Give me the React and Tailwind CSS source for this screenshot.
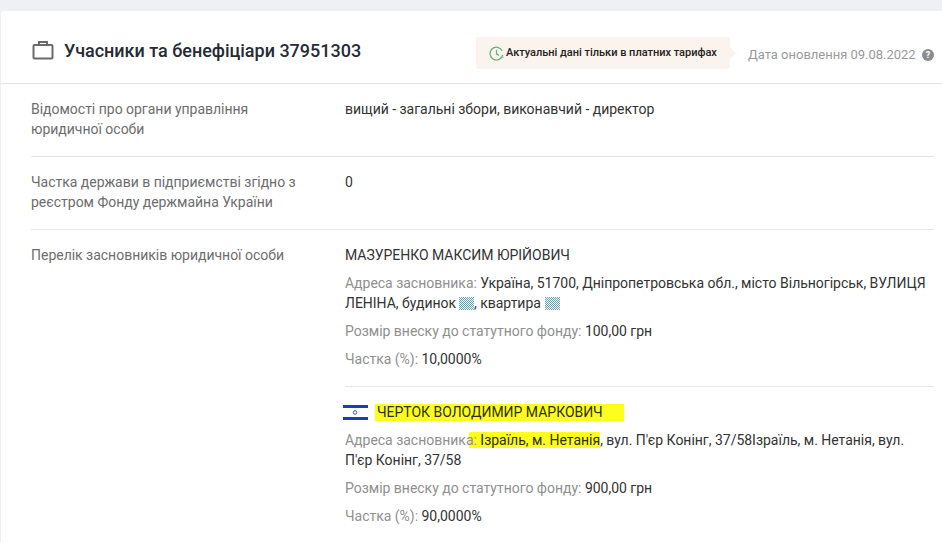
import React from 'react';

const Hidden = () => (
  <svg width="15" height="13" viewBox="0 0 15 13" shapeRendering="crispEdges" className="shrink-0">
    {Array.from({ length: 13 }).map((_, y) =>
      Array.from({ length: 15 }).map((_, x) =>
        (x + y) % 2 === 0 ? <rect key={`${x}-${y}`} x={x} y={y} width="1" height="1" fill="#5aa6b4" /> : null
      )
    )}
  </svg>
);

const Label = ({ children }) => <span className="text-[#8f8f8f]">{children}</span>;

const Row = ({ label, children, last }) => (
  <div className={`flex ml-[30px] mr-[8px] ${last ? 'pt-[15px]' : 'pt-[15px] pb-[17px] border-b border-[#e4e4e4]'}`}>
    <div className="w-[314px] shrink-0 pr-[12px] text-[#6d6d6d]">{label}</div>
    <div className="flex-1 text-[#333333]">{children}</div>
  </div>
);

export default function App() {
  return (
    <div className="h-[542px] w-[942px] overflow-hidden bg-[#eef0f5] pt-[11px] pl-px font-['Roboto',sans-serif] text-[14px] leading-[20px] tracking-[-0.015px]">
      <div className="h-full bg-white rounded-tl-[3px]">
        {/* Шапка */}
        <div className="flex h-[73px] items-center border-b border-[#e4e4e4] pl-[31px] pr-[8px]">
          <svg width="22" height="20" viewBox="0 0 22 20" fill="none" stroke="#6b6b6b" strokeWidth="2" className="shrink-0 mt-[6px]">
            <rect x="1.5" y="5" width="19" height="13.5" rx="1" />
            <path d="M7 5V2h8v3" />
          </svg>
          <h2 className="ml-[10px] text-[18px] font-medium text-[#262b33] mt-[8px]">Учасники та бенефіціари 37951303</h2>
          <div className="ml-auto relative flex h-[32px] w-[254px] items-center rounded-[3px] bg-[#fbf3ed] pl-[13px] text-[11px] font-medium text-[#222222] mt-[12px] whitespace-nowrap">
            <svg width="15" height="15" viewBox="0 0 16 16" fill="none" stroke="#5cb176" strokeWidth="1.3" className="shrink-0 mr-[2px]">
              <path d="M14.6 9.5A6.8 6.8 0 1 1 14 5" />
              <path d="M8 4v4.4l2.6 1.6" />
              <path d="M14.8 11.5v1" />
            </svg>
            Актуальні дані тільки в платних тарифах
            <span className="absolute right-[-6px] top-[10px] h-0 w-0 border-y-[6px] border-l-[6px] border-y-transparent border-l-[#fbf3ed]" />
          </div>
          <span className="ml-[18px] w-[168px] shrink-0 text-[#9a9a9a] text-[13px] mt-[16px] whitespace-nowrap">Дата оновлення 09.08.2022</span>
          <span className="ml-[6px] flex h-[12px] w-[12px] items-center justify-center rounded-full bg-[#8c8c8c] text-[9px] font-bold leading-none text-white mt-[16px]">?</span>
        </div>

        <Row label={<>Відомості про органи управління<br />юридичної особи</>}>
          вищий - загальні збори, виконавчий - директор
        </Row>

        <Row label={<>Частка держави в підприємстві згідно з<br />реєстром Фонду держмайна України</>}>
          0
        </Row>

        <Row last label="Перелік засновників юридичної особи">
          <div className="pb-[17px] border-b border-[#e4e4e4]">
            <div>МАЗУРЕНКО МАКСИМ ЮРІЙОВИЧ</div>
            <div className="mt-[8px]">
              <Label>Адреса засновника:</Label> Україна, 51700, Дніпропетровська обл., місто Вільногірськ, ВУЛИЦЯ
              <div className="flex items-center whitespace-pre">
                <span className="w-[114px] shrink-0">ЛЕНІНА, будинок</span>
                <Hidden />
                <span className="w-[71px] shrink-0">, квартира</span>
                <Hidden />
              </div>
            </div>
            <div className="mt-[8px]"><Label>Розмір внеску до статутного фонду:</Label> 100,00 грн</div>
            <div className="mt-[8px]"><Label>Частка (%):</Label> 10,0000%</div>
          </div>
          <div className="pt-[15px]">
            <div className="flex h-[20px] items-center">
              <svg width="25" height="15" viewBox="0 0 25 15" className="shrink-0 -ml-[2px] mt-[1px]">
                <rect width="25" height="15" fill="#ffffff" />
                <rect width="25" height="3" fill="#1a3fb0" />
                <rect y="12" width="25" height="3" fill="#1a3fb0" />
                <circle cx="12" cy="7.5" r="1.8" fill="none" stroke="#3f63c4" strokeWidth="1" />
              </svg>
              <span className="ml-[7px] bg-[#fdfd1e] pl-[2px] pr-[21px] leading-[17px] text-[#2f2f10]">ЧЕРТОК ВОЛОДИМИР МАРКОВИЧ</span>
            </div>
            <div className="mt-[8px]">
              <Label>Адреса засновник</Label><span className="bg-[linear-gradient(to_right,transparent_3px,#fdfd1e_3px)] text-[#2f2f10]"><span className="text-[#8f8f8f]">а:</span> Ізраїль, м. Нетанія</span>, вул. П'єр Конінг, 37/58Ізраїль, м. Нетанія, вул.<br />
              П'єр Конінг, 37/58
            </div>
            <div className="mt-[8px]"><Label>Розмір внеску до статутного фонду:</Label> 900,00 грн</div>
            <div className="mt-[8px]"><Label>Частка (%):</Label> 90,0000%</div>
          </div>
        </Row>
      </div>
    </div>
  );
}
